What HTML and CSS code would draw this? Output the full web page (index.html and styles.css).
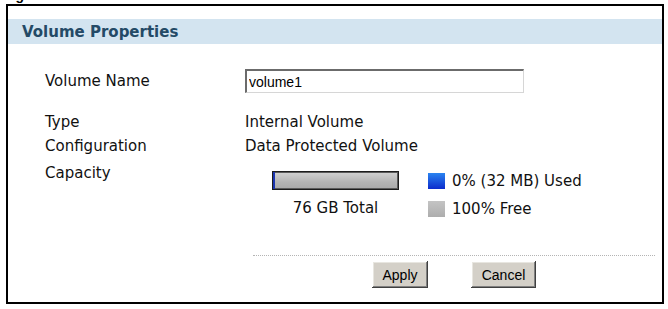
FILE: index.html
```html
<!DOCTYPE html>
<html>
<head>
<meta charset="utf-8">
<link rel="stylesheet" href="styles.css">
</head>
<body>
<div class="caption">Figure 64&nbsp;&nbsp;Volume: Edit</div>
<div class="frame">
  <div class="header">Volume Properties</div>
  <div class="form">
    <div class="row row-name">
      <div class="label">Volume Name</div>
      <input class="field" type="text" value="volume1">
    </div>
    <div class="row row-text first">
      <div class="label">Type</div>
      <div class="value">Internal Volume</div>
    </div>
    <div class="row row-text">
      <div class="label">Configuration</div>
      <div class="value">Data Protected Volume</div>
    </div>
    <div class="row row-capacity">
      <div class="label label-capacity">Capacity</div>
      <div class="capacity">
        <div class="usage">
          <div class="bar"><div class="bar-used" style="width:0%"></div></div>
          <div class="total">76 GB Total</div>
        </div>
        <div class="legend">
          <div class="legend-item"><span class="swatch swatch-used"></span><span>0% (32 MB) Used</span></div>
          <div class="legend-item second"><span class="swatch swatch-free"></span><span>100% Free</span></div>
        </div>
      </div>
    </div>
  </div>
  <div class="divider"></div>
  <div class="actions">
    <button class="btn btn-apply" type="button">Apply</button>
    <button class="btn btn-cancel" type="button">Cancel</button>
  </div>
</div>
</body>
</html>
```
FILE: styles.css
```css
html, body {
  margin: 0;
  padding: 0;
  background: #fff;
}

.caption {
  margin: -13px 0 0 3px;
  height: 16px;
  line-height: 16px;
  font: bold 14px/16px "Liberation Sans", Arial, sans-serif;
  color: #000;
  white-space: nowrap;
}

.frame {
  margin: 1px 0 0 6px;
  width: 658px;
  height: 300px;
  box-sizing: border-box;
  border: 2px solid #000;
  font: 15px "DejaVu Sans", Verdana, sans-serif;
  color: #111;
}

.header {
  margin-top: 13px;
  height: 25px;
  display: flex;
  align-items: center;
  padding-left: 14px;
  background: #d3e4f0;
  font: bold 15px "DejaVu Sans", Verdana, sans-serif;
  color: #244a66;
}

.form {
  padding-left: 37px;
  margin-top: 25px;
}

.row {
  display: flex;
}

.label {
  width: 200px;
  flex: none;
}

.row-name {
  height: 24px;
  align-items: center;
}

.field {
  width: 279px;
  height: 24px;
  box-sizing: border-box;
  margin: 0;
  padding: 0 2px;
  border-style: solid;
  border-width: 2px 1px 1px 2px;
  border-color: #6b6b6b #d6d6d6 #d6d6d6 #6b6b6b;
  background: #fff;
  font: 14px "Liberation Sans", Arial, sans-serif;
  color: #000;
  outline: none;
}

.row-text {
  line-height: 24px;
}

.row-text.first {
  margin-top: 17px;
}

.label-capacity {
  padding-top: 3px;
  line-height: 24px;
}

.capacity {
  display: flex;
}

.usage {
  width: 181px;
  display: flex;
  flex-direction: column;
  align-items: center;
  padding-top: 13px;
}

.bar {
  width: 127px;
  height: 19px;
  box-sizing: border-box;
  border: 1px solid #1c1c1c;
  box-shadow: inset 0 0 0 1px #5a5a5a;
  background: linear-gradient(#d2d2d2, #b4b4b4 60%, #a9a9a9);
  position: relative;
}

.bar-used {
  height: 100%;
  min-width: 2px;
  background: #1a34b0;
}

.total {
  margin-top: 9px;
  line-height: 18px;
}

.legend {
  padding-left: 2px;
  padding-top: 15px;
}

.legend-item {
  display: flex;
  align-items: center;
  height: 16px;
  gap: 7px;
  white-space: nowrap;
}

.legend-item.second {
  margin-top: 12px;
}

.swatch {
  width: 17px;
  height: 16px;
  flex: none;
}

.swatch-used {
  background: linear-gradient(#2a84f0, #0c2ccc);
}

.swatch-free {
  background: linear-gradient(#c4c4c4, #adadad);
}

.divider {
  margin: 38px 7px 0 245px;
  border-top: 1px dotted #b4b4b4;
}

.actions {
  display: flex;
  justify-content: center;
  gap: 43px;
  margin: 5px 7px 0 245px;
}

.btn {
  height: 27px;
  padding: 0;
  border: none;
  background: #d4d0c8;
  box-shadow: inset -1px -1px #404040, inset 1px 1px #ffffff, inset -2px -2px #808080, inset 2px 2px #e8e6e0;
  font: 14px "Liberation Sans", Arial, sans-serif;
  color: #000;
}

.btn-apply {
  width: 56px;
}

.btn-cancel {
  width: 65px;
}
```
